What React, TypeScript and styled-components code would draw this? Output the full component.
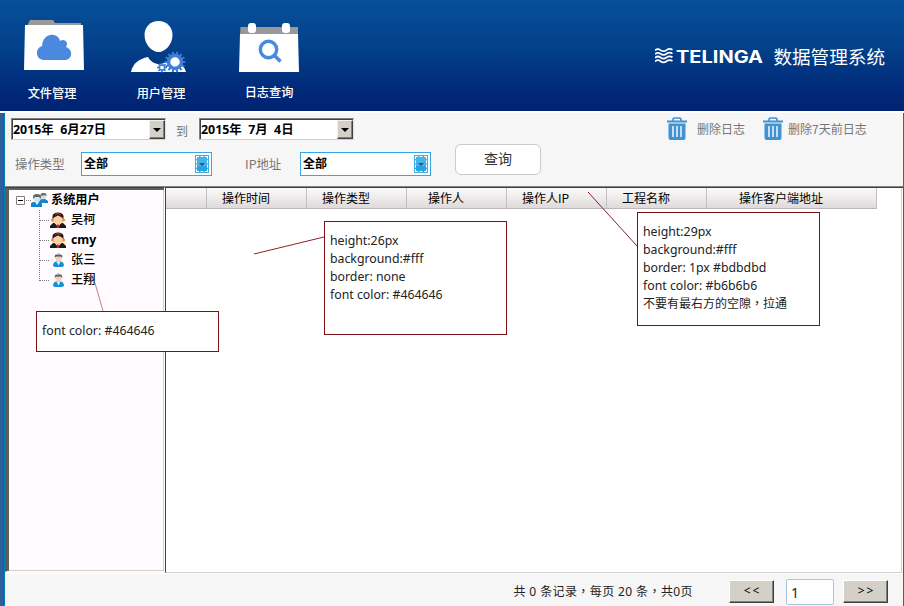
import React from "react";
import styled, { createGlobalStyle, css } from "styled-components";

const Global = createGlobalStyle`
  * { box-sizing: border-box; }
  body { margin: 0; overflow: hidden; background: #f6f6f6; }
`;
const sans = `"Noto Sans", "Noto Sans CJK SC", sans-serif`;
const cjk = `"Noto Sans CJK SC", "Noto Sans", sans-serif`;

const Window = styled.div`
  position: relative;
  width: 904px;
  height: 606px;
  overflow: hidden;
  display: flex;
  flex-direction: column;
  font: 12px/18px ${cjk};
  color: #000;
  white-space: pre;
`;
const Header = styled.header`
  height: 111px;
  flex: none;
  display: flex;
  justify-content: space-between;
  background: linear-gradient(#07509a, #03418a 42%, #00297a 82%, #002370);
`;
const Nav = styled.nav`
  display: flex;
  padding: 17px 0 0 19px;
  gap: 38px;
`;
const NavItem = styled.a<{ $lift?: number; $shift?: number }>`
  width: 70px;
  display: flex;
  flex-direction: column;
  align-items: center;
  color: #fff;
  font-size: 12.2px;
  font-weight: 500;
  svg { display: block; }
  span {
    margin-top: ${(p) => 10 - (p.$lift ?? 0)}px;
    margin-right: ${(p) => 4 - 2 * (p.$shift ?? 0)}px;
  }
`;
const Brand = styled.div`
  display: flex;
  align-items: center;
  height: 30px;
  margin: 41px 19px 0 0;
  gap: 10px;
  color: #fff;
  font-size: 18.6px;
`;
const Body = styled.div`
  flex: 1;
  min-height: 0;
  border-top: 2px solid #fff;
  display: flex;
  background: #f6f6f6;
`;
const Frame = styled.div`
  width: 5px;
  flex: none;
  background: linear-gradient(90deg, #2d5f9d 0 3px, #2a568b 3px 4px, #0084b4 4px);
`;
const RightFrame = styled.div`
  width: 1px;
  background: #087a99;
`;
const Content = styled.div`
  flex: 1;
  display: flex;
  flex-direction: column;
  min-width: 0;
`;
const Toolbar = styled.div`
  height: 73px;
  flex: none;
  display: flex;
`;
const Filters = styled.div`
  width: 450px;
  flex: none;
  padding: 5px 0 0 6px;
`;
const DateRow = styled.div`
  display: flex;
  height: 22px;
  color: #777;
`;
const DateSeparator = styled.span`
  width: 33px;
  padding: 5px 0 0 10px;
  line-height: 16px;
`;
const boldInput = css`
  font: bold 12.2px/18px "Noto Sans", "Noto Sans CJK SC", sans-serif;
  color: #000;
`;
const DateBox = styled.div`
  ${boldInput}
  font-size: 12.4px;
  line-height: 19px;
  width: 155px;
  height: 22px;
  display: flex;
  justify-content: space-between;
  border: 1px solid;
  border-color: #808080 #e4e1dc #d4d0c8 #808080;
  box-shadow: inset 1px 1px #404040;
  background: #fff;
  padding: 1px 0 0 1px;
`;
const DropButton = styled.i`
  width: 16px;
  height: 19px;
  background: #d4d0c8;
  border: 1px solid;
  border-color: #f4f2ee #404040 #404040 #f4f2ee;
  box-shadow: inset -1px -1px #808080;
  display: flex;
  align-items: center;
  justify-content: center;
`;
const FilterRow = styled.div`
  display: flex;
  align-items: center;
  height: 24px;
  margin-top: 12px;
  padding-left: 4px;
  font-size: 12.4px;
  color: #777;
`;
const FieldLabel = styled.span<{ $width: number }>`
  flex: none;
  width: ${(p) => p.$width}px;
`;
const SelectBox = styled.div`
  ${boldInput}
  font-size: 12px;
  flex: none;
  width: 131px;
  height: 24px;
  margin-right: 33px;
  border: 1px solid #35a7e4;
  background: #fff;
  display: flex;
  align-items: center;
  justify-content: space-between;
  padding: 0 2px;
`;
const SelectArrow = styled.i`
  width: 14px;
  height: 18px;
  border: 1px solid #3fade5;
  outline: 1px dashed #fff;
  outline-offset: -2px;
  background: linear-gradient(#45b3ea 60%, #2ba2dc 60%);
  display: flex;
  align-items: center;
  justify-content: center;
`;
const Query = styled.button`
  width: 86px;
  height: 31px;
  margin-top: 31px;
  padding: 0 0 4px;
  border: 1px solid #cbcbcb;
  border-radius: 6px;
  background: #fff;
  color: #333;
  font: 14px/20px ${cjk};
`;
const Actions = styled.div`
  display: flex;
  padding: 4px 0 0 126px;
  color: #777;
`;
const Action = styled.a<{ $width: number; $gap: number }>`
  width: ${(p) => p.$width}px;
  height: 24px;
  display: flex;
  gap: ${(p) => p.$gap}px;
  line-height: 23px;
`;
const Main = styled.div`
  height: 387px;
  flex: none;
  display: flex;
  border-top: 1px solid #848484;
  box-shadow: inset 0 1px #404040;
`;
const Tree = styled.div`
  width: 160px;
  height: 385px;
  padding: 2px 0 0 7px;
  background: #fffbff;
  border: solid;
  border-width: 1px 1px 1px 2px;
  border-color: #404040 #fff #fff #5b5b5b;
  box-shadow: inset 2px 2px #606060, inset -1px -1px #d4d0c8;
`;
const TreeRow = styled.div<{ $root?: boolean; $bold?: boolean }>`
  height: 20px;
  display: flex;
  align-items: center;
  gap: ${(p) => (p.$root ? 3 : 5)}px;
  padding-left: ${(p) => (p.$root ? 2 : 36)}px;
  font: ${(p) => (p.$bold ? 700 : 500)} 12.2px/18px ${sans};
  svg { flex: none; }
`;
const Toggle = styled.svg`
  margin-right: 3px;
`;
const Branches = styled.svg`
  display: block;
  height: 1px;
  margin-bottom: -1px;
  width: 40px;
  overflow: visible;
`;
const Grid = styled.div`
  flex: 1;
  margin-top: 1px;
  background: #fff;
  border-left: 1px solid #404040;
  border-right: 1px solid #fff;
  border-bottom: 1px solid #d4d0c8;
  box-shadow: inset -1px 0 #d4d0c8;
`;
const HeadRow = styled.div`
  display: grid;
  width: 711px;
  height: 21px;
  grid-template-columns: 41px repeat(5, 100px) 170px;
  background: linear-gradient(#fbf9f9, #eeebeb 50%, #ded9da);
  border-bottom: 1px solid #bdb7b9;
`;
const HeadCell = styled.div<{ $left: number }>`
  border-right: 1px solid #c3bec3;
  padding-left: ${(p) => p.$left}px;
  line-height: 20px;
`;
const Footer = styled.footer`
  flex: 1;
  border-top: 1px solid #fff;
  display: flex;
  padding: 5px 15px 0 0;
  justify-content: flex-end;
  font: 12px/26px ${sans};
  color: #222;
`;
const Summary = styled.span`
  margin-right: 36px;
  line-height: 25px;
  letter-spacing: 0.4px;
`;
const Comma = styled.span`
  font-family: "Noto Sans CJK TC", sans-serif;
  line-height: 1;
`;
const PageButton = styled.button`
  width: 45px;
  height: 23px;
  margin-top: 1px;
  padding: 0 0 1px 2px;
  border: 1px solid;
  border-color: #fff #404040 #404040 #fff;
  box-shadow: inset -1px -1px #808080;
  background: #d4d0c8;
  color: #000;
  font: 12px/18px "Noto Sans", sans-serif;
  letter-spacing: 1.8px;
`;
const PageInput = styled.div`
  width: 48px;
  height: 26px;
  margin: 0 9px 0 12px;
  padding-left: 4px;
  border: 1px solid #a9c6dd;
  border-radius: 2px;
  background: #fff;
  font: 14px/26px ${sans};
`;
const Note = styled.div<{ $x: number; $y: number; $h: number }>`
  position: absolute;
  left: ${(p) => p.$x}px;
  top: ${(p) => p.$y}px;
  width: 183px;
  height: ${(p) => p.$h}px;
  padding: 10px 5px;
  border: 1px solid #7d1016;
  background: #fff;
  font: 12.3px/18px ${sans};
  color: #222;
`;
const NoteCjk = styled.span`
  font-size: 12px;
`;
const Leaders = styled.svg`
  position: absolute;
  left: 0;
  top: 0;
  pointer-events: none;
`;

const gearTeeth = (cx: number, cy: number, r: number, n: number) =>
  Array.from({ length: n }, (_, i) => {
    const a = (i * Math.PI * 2) / n;
    return `M${cx} ${cy}L${cx + r * Math.cos(a)} ${cy + r * Math.sin(a)}`;
  }).join("");

const FolderIcon = () => (
  <svg width="70" height="57" viewBox="19 17 70 57">
    <path d="M27 26l3-6h23l2 3h26v5H27z" fill="#999" />
    <path d="M25 25h58l1 45H24z" fill="#fff" />
    <path d="M44 60c-9-.5-9-12-2-14 1-14 16-14 18-5 5-3 9 2 6 6 8 3 6 13-1 13z" fill="#4b89df" />
  </svg>
);
const UserIcon = () => (
  <svg width="70" height="57" viewBox="127 17 70 57">
    <path d="M158.500 21c8 0 14 6 14 14 0 9-7 17-14 17s-14-8-14-17c0-8 6-14 14-14z" fill="#fff" />
    <path d="M131 72c2-9 8-13 17-15 5 9 15 9 22 2 9 2 14 6 16 13z" fill="#fff" />
    <path d={gearTeeth(175, 62, 10.5, 14)} stroke="#3978cd" strokeWidth="2" />
    <circle cx="175" cy="62" r="6.500" fill="#fff" stroke="#3f7fd5" strokeWidth="3.500" />
    <path d={gearTeeth(162, 67.5, 5, 8)} stroke="#3978cd" strokeWidth="1.600" />
    <circle cx="162" cy="67.500" r="2.700" fill="#fff" stroke="#3f7fd5" strokeWidth="1.700" />
  </svg>
);
const LogIcon = () => (
  <svg width="70" height="57" viewBox="235 17 70 57">
    <path d="M240.500 27H298v8H240z" fill="#999" />
    <path d="M240 34h58l1 38h-60z" fill="#fff" />
    <rect x="248" y="23" width="8" height="10" rx="3" fill="#fff" />
    <rect x="282" y="23" width="8" height="10" rx="3" fill="#fff" />
    <circle cx="268.500" cy="49.500" r="8.200" fill="none" stroke="#4b89df" strokeWidth="3.400" />
    <path d="M274.500 55.500l6 6" stroke="#4b89df" strokeWidth="3.600" />
  </svg>
);
const Telinga = () => (
  <svg width="108" height="22" viewBox="0 0 108 22">
    {[5.5, 9.2, 12.9, 16.6].map((y) => (
      <path key={y} d={`M0 ${y}q2.500-2.600 5.500-.4t6 0 6-.2`} stroke="#fff" strokeWidth="1.700" fill="none" />
    ))}
    <text x="21" y="17.500" textLength="87" lengthAdjust="spacingAndGlyphs" fill="#fff" fontFamily="Inter, sans-serif" fontWeight="700" fontSize="17">TELINGA</text>
  </svg>
);
const TrashIcon = () => (
  <svg width="20" height="24" viewBox="0 0 20 24" fill="none">
    <path d="M6 4V2.500Q6 1 8 1h4q2 0 2 1.500V4" stroke="#4092d1" strokeWidth="1.600" />
    <path d="M0 3.500h20V5.500H0z" fill="#4092d1" />
    <path d="M1.500 6.500h17v14q0 2.500-2 2.500h-13q-2 0-2-2.500z" fill="#4092d1" />
    <path d="M6 9v11M10 9v11M14 9v11" stroke="#f4f8fb" strokeWidth="1.500" />
  </svg>
);
const Triangle = ({ color = "#000", size = 8 }: { color?: string; size?: number }) => (
  <svg width={size} height={size / 2} viewBox="0 0 8 4"><path d="M0 0h8L4 4z" fill={color} /></svg>
);
const AdminAvatar = () => (
  <svg width="16" height="16" viewBox="0 0 16 16">
    <path d="M0 16v-2l3-3h10l3 3v2z" fill="#1b1b1b" />
    <path d="M5.500 11h5L8 16z" fill="#fff" />
    <path d="M7.400 11.500h1.200l.8 4.500H6.600z" fill="#e11a1a" />
    <path d="M3 6l5-3 5 3v4l-3 2.500H6L3 10z" fill="#f9cda6" />
    <path d="M1 7h2.500v3L1 9zM15 7h-2.500v3L15 9z" fill="#f49a20" />
    <path d="M2.500 7.500V4Q3 .5 8 .5t5.500 3.500v3.500l-1.500-2-4-2-4 2z" fill="#30180d" />
    <path d="M5 2.500l3-1 3 1" stroke="#a84b24" fill="none" />
  </svg>
);
const MemberAvatar = () => (
  <svg width="16" height="16" viewBox="0 0 16 16">
    <path d="M3 14q0-4 3-4.500h5q3 .5 3 4.500l-2 1H5z" fill="#168fda" />
    <path d="M6.500 9.500h4l-2 4z" fill="#e6f7ff" />
    <circle cx="8.500" cy="6" r="3.200" fill="#f7cfb0" />
    <path d="M4.800 6V4q1-2.500 3.700-2.500T12.200 4v2L11 4.500H6z" fill="#47545a" />
    <path d="M5.500 2.600h6" stroke="#b4c2c6" />
  </svg>
);
const GroupAvatar = () => (
  <svg width="17" height="16" viewBox="0 0 17 16">
    <path d="M8 11V8l3-1h3l3 2v2z" fill="#1686c8" />
    <circle cx="12.500" cy="4.500" r="2.700" fill="#d4dde0" />
    <path d="M9.500 4Q9 1 12.500 1T15.500 4l-2-1z" fill="#59666c" />
    <path d="M0 15v-3q0-2 3-2h5q3 0 3 2v3z" fill="#1186cf" />
    <path d="M4 10h4l-2 3z" fill="#e8f7ff" />
    <circle cx="6" cy="7" r="3.300" fill="#dce1e2" />
    <path d="M2 7V5q0-3 4-3t4 3v2L8 5H4z" fill="#5b686c" />
  </svg>
);

const members = [
  { name: "吴柯", admin: true },
  { name: "cmy", admin: true },
  { name: "张三", admin: false },
  { name: "王翔", admin: false },
];
const columns: [string, number][] = [
  ["", 0], ["操作时间", 15], ["操作类型", 15], ["操作人", 21], ["操作人IP", 15], ["工程名称", 15], ["操作客户端地址", 32],
];

export default function App() {
  return (
    <Window>
      <Global />
      <Header>
        <Nav>
          <NavItem><FolderIcon /><span>文件管理</span></NavItem>
          <NavItem $shift={1}><UserIcon /><span>用户管理</span></NavItem>
          <NavItem $lift={1} $shift={1}><LogIcon /><span>日志查询</span></NavItem>
        </Nav>
        <Brand><Telinga /><span>数据管理系统</span></Brand>
      </Header>
      <Body>
        <Frame />
        <Content>
          <Toolbar>
            <Filters>
              <DateRow>
                <DateBox>2015年  6月27日<DropButton><Triangle /></DropButton></DateBox>
                <DateSeparator>到</DateSeparator>
                <DateBox>2015年  7月  4日<DropButton><Triangle /></DropButton></DateBox>
              </DateRow>
              <FilterRow>
                <FieldLabel $width={66}>操作类型</FieldLabel>
                <SelectBox>全部<SelectArrow><Triangle color="#17607f" size={6} /></SelectArrow></SelectBox>
                <FieldLabel $width={55}>IP地址</FieldLabel>
                <SelectBox>全部<SelectArrow><Triangle color="#17607f" size={6} /></SelectArrow></SelectBox>
              </FilterRow>
            </Filters>
            <Query>查询</Query>
            <Actions>
              <Action $width={96} $gap={10}><TrashIcon />删除日志</Action>
              <Action $width={110} $gap={5}><TrashIcon />删除7天前日志</Action>
            </Actions>
          </Toolbar>
          <Main>
            <Tree>
              <Branches>
                <path d="M12 10.500h5M25.500 20v71M26 30.500h10M26 50.500h10M26 70.500h10M26 90.500h10" stroke="#777" strokeDasharray="1 1" fill="none" />
              </Branches>
              <TreeRow $root $bold>
                <Toggle width="9" height="9"><path d="M.5.500h8v8h-8z" fill="#fff" stroke="#808080" /><path d="M2 4.500h5" stroke="#000" /></Toggle>
                <GroupAvatar />系统用户
              </TreeRow>
              {members.map((m) => (
                <TreeRow key={m.name} $bold={m.name === "cmy"}>
                  {m.admin ? <AdminAvatar /> : <MemberAvatar />}{m.name}
                </TreeRow>
              ))}
            </Tree>
            <Grid>
              <HeadRow>{columns.map(([label, left]) => <HeadCell key={label} $left={left}>{label}</HeadCell>)}</HeadRow>
            </Grid>
          </Main>
          <Footer>
            <Summary>共 0 条记录<Comma lang="zh-TW">，</Comma>每页 20 条<Comma lang="zh-TW">，</Comma>共0页</Summary>
            <PageButton>&lt;&lt;</PageButton>
            <PageInput>1</PageInput>
            <PageButton>&gt;&gt;</PageButton>
          </Footer>
        </Content>
        <RightFrame />
      </Body>
      <Leaders width="904" height="606" fill="none" stroke="#8d2027">
        <path d="M254 254L324 237M588 192L637 246" />
        <path d="M95 283L103 311" stroke="#c58082" />
      </Leaders>
      <Note $x={36} $y={311} $h={41}>font color: #464646</Note>
      <Note $x={324} $y={221} $h={114}>{"height:26px\nbackground:#fff\nborder: none\nfont color: #464646"}</Note>
      <Note $x={637} $y={212} $h={114}>
        {"height:29px\nbackground:#fff\nborder: 1px #bdbdbd\nfont color: #b6b6b6\n"}
        <NoteCjk>不要有最右方的空隙<Comma lang="zh-TW">，</Comma>拉通</NoteCjk>
      </Note>
    </Window>
  );
}
